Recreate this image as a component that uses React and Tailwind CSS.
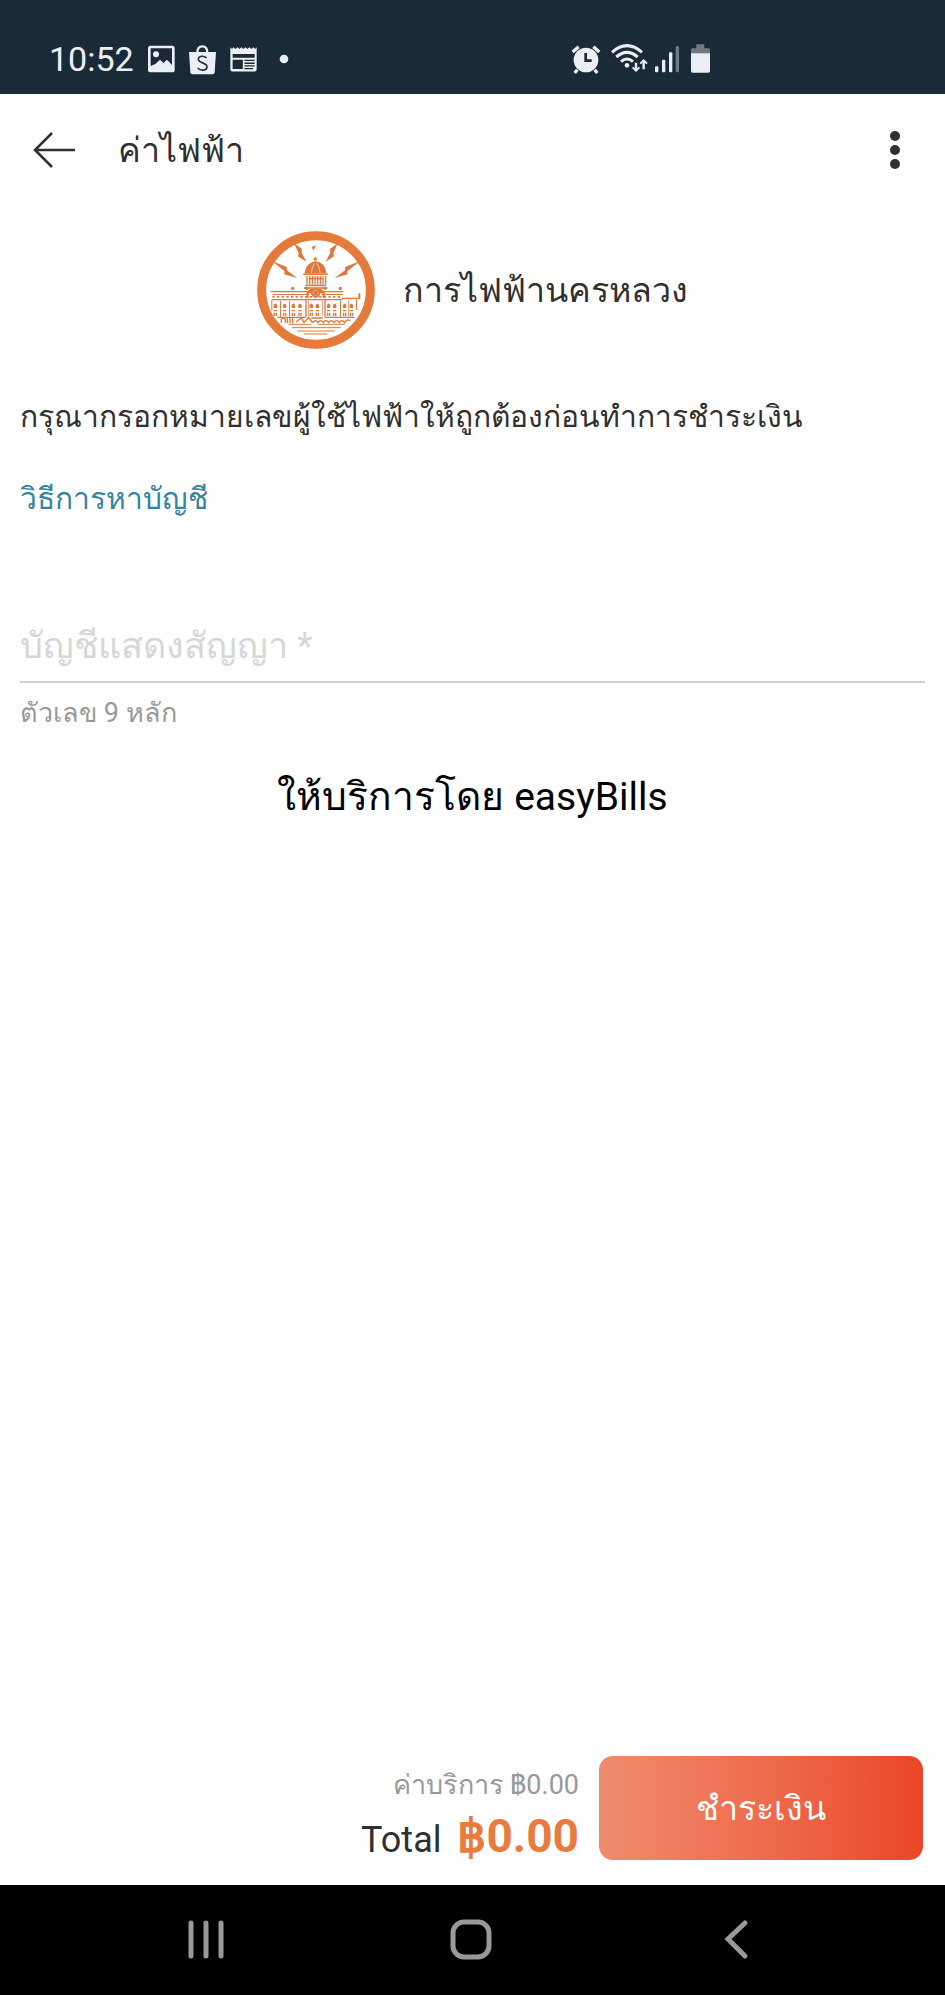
const range = (n) => Array.from({ length: n }, (_, i) => i);

function StatusBar() {
  return (
    <div className="flex h-[94px] items-end bg-[#1a2a36] pb-[19px] pl-[49px] text-[#ebeff5]">
      <span className="text-[34px] leading-8">10:52</span>
      <div className="ml-[14px] flex items-end gap-[14px]">
        <svg className="h-8 w-[27px]" viewBox="54 68 81 96" aria-hidden="true">
          <rect x="54" y="76" width="80" height="80" rx="8" fill="currentColor" />
          <path d="M62 84H126V134L117 124L110 118L101 128L90 118L76 131L62 137Z" fill="#1a2a36" />
          <circle cx="78" cy="102" r="9" fill="currentColor" />
        </svg>
        <svg className="h-8 w-[27px]" viewBox="177 68 81 96" aria-hidden="true">
          <path d="M202 97C202 82 208 78 217 78S232 82 232 97" fill="none" stroke="currentColor" strokeWidth="7" />
          <path d="M177 95H258L254 156Q253 162 247 162H188Q182 162 181 156Z" fill="currentColor" />
          <path d="M230 113C222 105 205 106 205 117C205 130 231 125 231 139C231 151 212 153 203 143" fill="none" stroke="#26343f" strokeWidth="5" />
        </svg>
        <svg className="h-8 w-[27px]" viewBox="300 68 82 96" aria-hidden="true">
          <path d="M301 80L306 86L311 80L317 86L323 80L329 86L335 80L341 86L347 80L353 86L359 80L365 86L371 80L376 86L381 80V148Q381 154 375 154H307Q301 154 301 148Z" fill="currentColor" />
          <path d="M308 101H375V112H308ZM308 118H339V146H308ZM344 118H375V122H344ZM344 127H375V131H344ZM344 135H375V139H344ZM344 143H370V147H344Z" fill="#1a2a36" />
        </svg>
        <svg className="ml-2 h-8 w-[10px]" viewBox="448 68 30 96" aria-hidden="true">
          <circle cx="463" cy="116" r="13" fill="currentColor" />
        </svg>
      </div>
      <div className="ml-[282px] flex items-end">
        <svg className="h-8 w-[30px]" viewBox="94 68 90 96" aria-hidden="true">
          <g fill="none" stroke="currentColor" strokeWidth="10">
            <path d="M99 95L117 79M161 79L179 95" />
            <path d="M113 148L105 158M165 148L173 158" />
          </g>
          <circle cx="139" cy="119" r="37" fill="currentColor" />
          <path d="M138 98V121H156" fill="none" stroke="#1a2a36" strokeWidth="8" />
        </svg>
        <svg className="ml-[10px] h-8 w-[38px]" viewBox="213 68 114 96" aria-hidden="true">
          <g fill="none" stroke="currentColor" strokeWidth="9">
            <path d="M216 96Q261 56 306 96" />
            <path d="M229 110Q261 82 293 110" />
            <path d="M243 124Q261 108 279 124" />
            <path d="M288 127V149M311 147V123" strokeWidth="7" />
            <path d="M278 141L288 151L298 141M301 130L311 120L321 130" strokeWidth="6" />
          </g>
          <circle cx="261" cy="135" r="7" fill="currentColor" />
        </svg>
        <svg className="ml-[6px] h-8 w-6" viewBox="345 68 72 96" aria-hidden="true">
          <g fill="currentColor">
            <rect x="345" y="138" width="10" height="18" rx="3" />
            <rect x="366" y="118" width="10" height="38" rx="3" />
            <rect x="387" y="96" width="10" height="60" rx="3" />
            <rect x="407" y="78" width="10" height="78" rx="3" fill="#6f7a84" />
          </g>
        </svg>
        <svg className="ml-3 h-8 w-[19px]" viewBox="453 68 57 96" aria-hidden="true">
          <path d="M469 72H493V84H506Q510 84 510 88V100H453V88Q453 84 457 84H469Z" fill="#72777c" />
          <path d="M453 99H510V152Q510 157 505 157H458Q453 157 453 152Z" fill="currentColor" />
        </svg>
      </div>
    </div>
  );
}

function Emblem() {
  return (
    <svg className="size-[118px] shrink-0" viewBox="33 31 354 354" role="img" aria-label="การไฟฟ้านครหลวง">
      <circle cx="210" cy="208" r="163" fill="#fff" stroke="#e57a3a" strokeWidth="27" />
      <g fill="#e0763a">
        <path d="M78 121L122 139L123 149L153 172L115 161L116 152Z" />
        <path d="M342 121L298 139L297 149L266 172L305 161L304 152Z" />
        <path d="M144 68L168 85L167 96L181 123L156 107L158 98Z" />
        <path d="M275 68L252 85L253 96L239 123L264 107L262 98Z" />
        <path d="M198 78L209 74L206 83L201 90Z" />
        <circle cx="208" cy="115" r="5" />
        <path d="M176 158C178 134 194 124 208 122C224 124 239 134 241 158Z" />
        <rect x="172" y="158" width="73" height="5" />
        <path d="M178 192H240V197H178ZM174 200H244V204H174Z" />
        {range(8).map((i) => (
          <rect key={i} x={181 + i * 8} y="166" width="4" height="26" />
        ))}
        <path d="M188 172H230V176H188Z" />
        <circle cx="209" cy="217" r="14" />
        <path d="M182 214L193 204H225L236 214V232H230V218H188V232H182Z" />
        <path d="M74 211H188V215H74ZM230 211H292V215H230ZM80 220H190V223H80ZM228 220H290V223H228ZM288 231H342V235H288ZM78 235H290V239H78Z" />
        <circle cx="140" cy="203" r="5" />
        <circle cx="182" cy="203" r="5" />
        <circle cx="237" cy="203" r="5" />
        <circle cx="283" cy="203" r="5" />
        <path d="M337 218H343V234H337Z" />
        {range(15).map((i) => (
          <rect key={i} x={79 + i * 14} y="226" width="7" height="5" />
        ))}
        {[88, 116, 142, 162, 196, 214, 248, 266, 296, 316].map((x) => (
          <g key={x}>
            <path d={`M${x - 5} 262V253Q${x} 244 ${x + 5} 253V262Z`} />
            <path d={`M${x - 5} 268H${x + 5}V272H${x - 5}ZM${x - 5} 276H${x - 1}V286H${x - 5}ZM${x + 1} 276H${x + 5}V286H${x + 1}Z`} />
          </g>
        ))}
        <path d="M76 238H79V268H76ZM102 240H105V290H102ZM129 240H132V288H129ZM178 236H182V290H178ZM186 240H188V286H186ZM228 240H230V286H228ZM235 236H239V290H235ZM282 240H285V288H282ZM306 240H308V288H306ZM330 236H333V268H330Z" />
      </g>
      <g fill="none" stroke="#e0763a">
        <path d="M94 290H178M238 290H326" strokeWidth="4" />
        <path d="M106 306V296Q112 288 118 296V306M124 308V292M132 308V292M140 308V292M150 304L166 292L174 306L188 290L200 307" strokeWidth="4" />
        <path d="M196 292H230M200 306Q208 294 216 306Q224 294 232 306Q240 294 248 306Q256 294 264 306Q272 294 280 306Q288 294 296 306Q302 294 312 300" strokeWidth="4" />
        <path d="M128 311H196M216 311H296" strokeWidth="3" />
        <path d="M138 321H284M154 331H266M174 340H244" strokeWidth="3" />
      </g>
      <g fill="none" stroke="#fff" strokeWidth="2">
        <path d="M196 156Q198 138 205 128M222 156Q220 138 212 128" />
        <circle cx="209" cy="217" r="8" strokeDasharray="3 3" />
      </g>
    </svg>
  );
}

function SystemNav() {
  return (
    <nav className="grid h-[110px] grid-cols-3 items-center justify-items-center bg-black pl-[74px] pr-[77px] text-[#999]">
      <button type="button" aria-label="Recent apps">
        <svg className="h-11 w-11" viewBox="0 0 44 44" fill="none" stroke="currentColor" strokeWidth="5" strokeLinecap="round">
          <path d="M7 5V38M22 5V38M37 5V38" />
        </svg>
      </button>
      <button type="button" aria-label="Home">
        <svg className="h-11 w-11" viewBox="0 0 44 44" fill="none" stroke="currentColor" strokeWidth="5">
          <rect x="4" y="4" width="36" height="35" rx="11" />
        </svg>
      </button>
      <button type="button" aria-label="Back">
        <svg className="h-11 w-11" viewBox="0 0 44 44" fill="none" stroke="currentColor" strokeWidth="5" strokeLinecap="round">
          <path d="M31 5L14 21L31 38" />
        </svg>
      </button>
    </nav>
  );
}

export default function App() {
  return (
    <div className="flex min-h-screen flex-col bg-white font-[Roboto,sans-serif] text-[#303030]">
      <StatusBar />
      <header className="flex h-28 items-center px-8">
        <button type="button" aria-label="ย้อนกลับ">
          <svg className="h-9 w-11" viewBox="0 0 44 36" fill="none" stroke="currentColor" strokeWidth="2.5">
            <path d="M43 18H3M20 1L3 18L20 35" />
          </svg>
        </button>
        <h1 className="ml-[42px] text-[34px] leading-[48px]">ค่าไฟฟ้า</h1>
        <button type="button" aria-label="เมนู" className="ml-auto">
          <svg className="h-10 w-9" viewBox="0 0 36 40" fill="currentColor">
            <circle cx="18" cy="6" r="5" />
            <circle cx="18" cy="20" r="5" />
            <circle cx="18" cy="34" r="5" />
          </svg>
        </button>
      </header>

      <main className="flex grow flex-col px-5">
        <div className="mt-[25px] flex items-center justify-center gap-7">
          <Emblem />
          <h2 className="text-[34px] leading-[48px]">การไฟฟ้านครหลวง</h2>
        </div>
        <p className="mt-11 text-[30px] leading-[48px]">กรุณากรอกหมายเลขผู้ใช้ไฟฟ้าให้ถูกต้องก่อนทำการชำระเงิน</p>
        <a href="#find-account" className="mt-[34px] self-start text-[30px] leading-[48px] text-[#35859e]">
          วิธีการหาบัญชี
        </a>
        <input
          type="text"
          inputMode="numeric"
          aria-label="บัญชีแสดงสัญญา"
          aria-describedby="account-hint"
          placeholder="บัญชีแสดงสัญญา *"
          className="mt-[88px] h-[72px] w-full border-b-2 border-[#d0d0d0] text-[36px] outline-none placeholder:text-[#d6d6d6]"
        />
        <p id="account-hint" className="mt-[6px] text-[27px] leading-[48px] text-[#999]">
          ตัวเลข 9 หลัก
        </p>
        <p className="mt-9 text-center text-[39px] leading-[48px] text-black">ให้บริการโดย easyBills</p>
      </main>

      <footer className="flex items-end justify-end gap-5 px-[22px] pb-[25px]">
        <div className="text-right">
          <p className="text-[27px] leading-[62px] text-[#999]">ค่าบริการ ฿0.00</p>
          <p className="flex items-baseline justify-end gap-4 leading-10">
            <span className="text-[36px]">Total</span>
            <strong className="text-[46px] font-bold text-[#e87c3e]">฿0.00</strong>
          </p>
        </div>
        <button
          type="button"
          className="h-[104px] w-[324px] rounded-[14px] bg-linear-to-r from-[#f08c6e] to-[#ea4526] text-[34px] leading-[48px] text-white"
        >
          ชำระเงิน
        </button>
      </footer>
      <SystemNav />
    </div>
  );
}
